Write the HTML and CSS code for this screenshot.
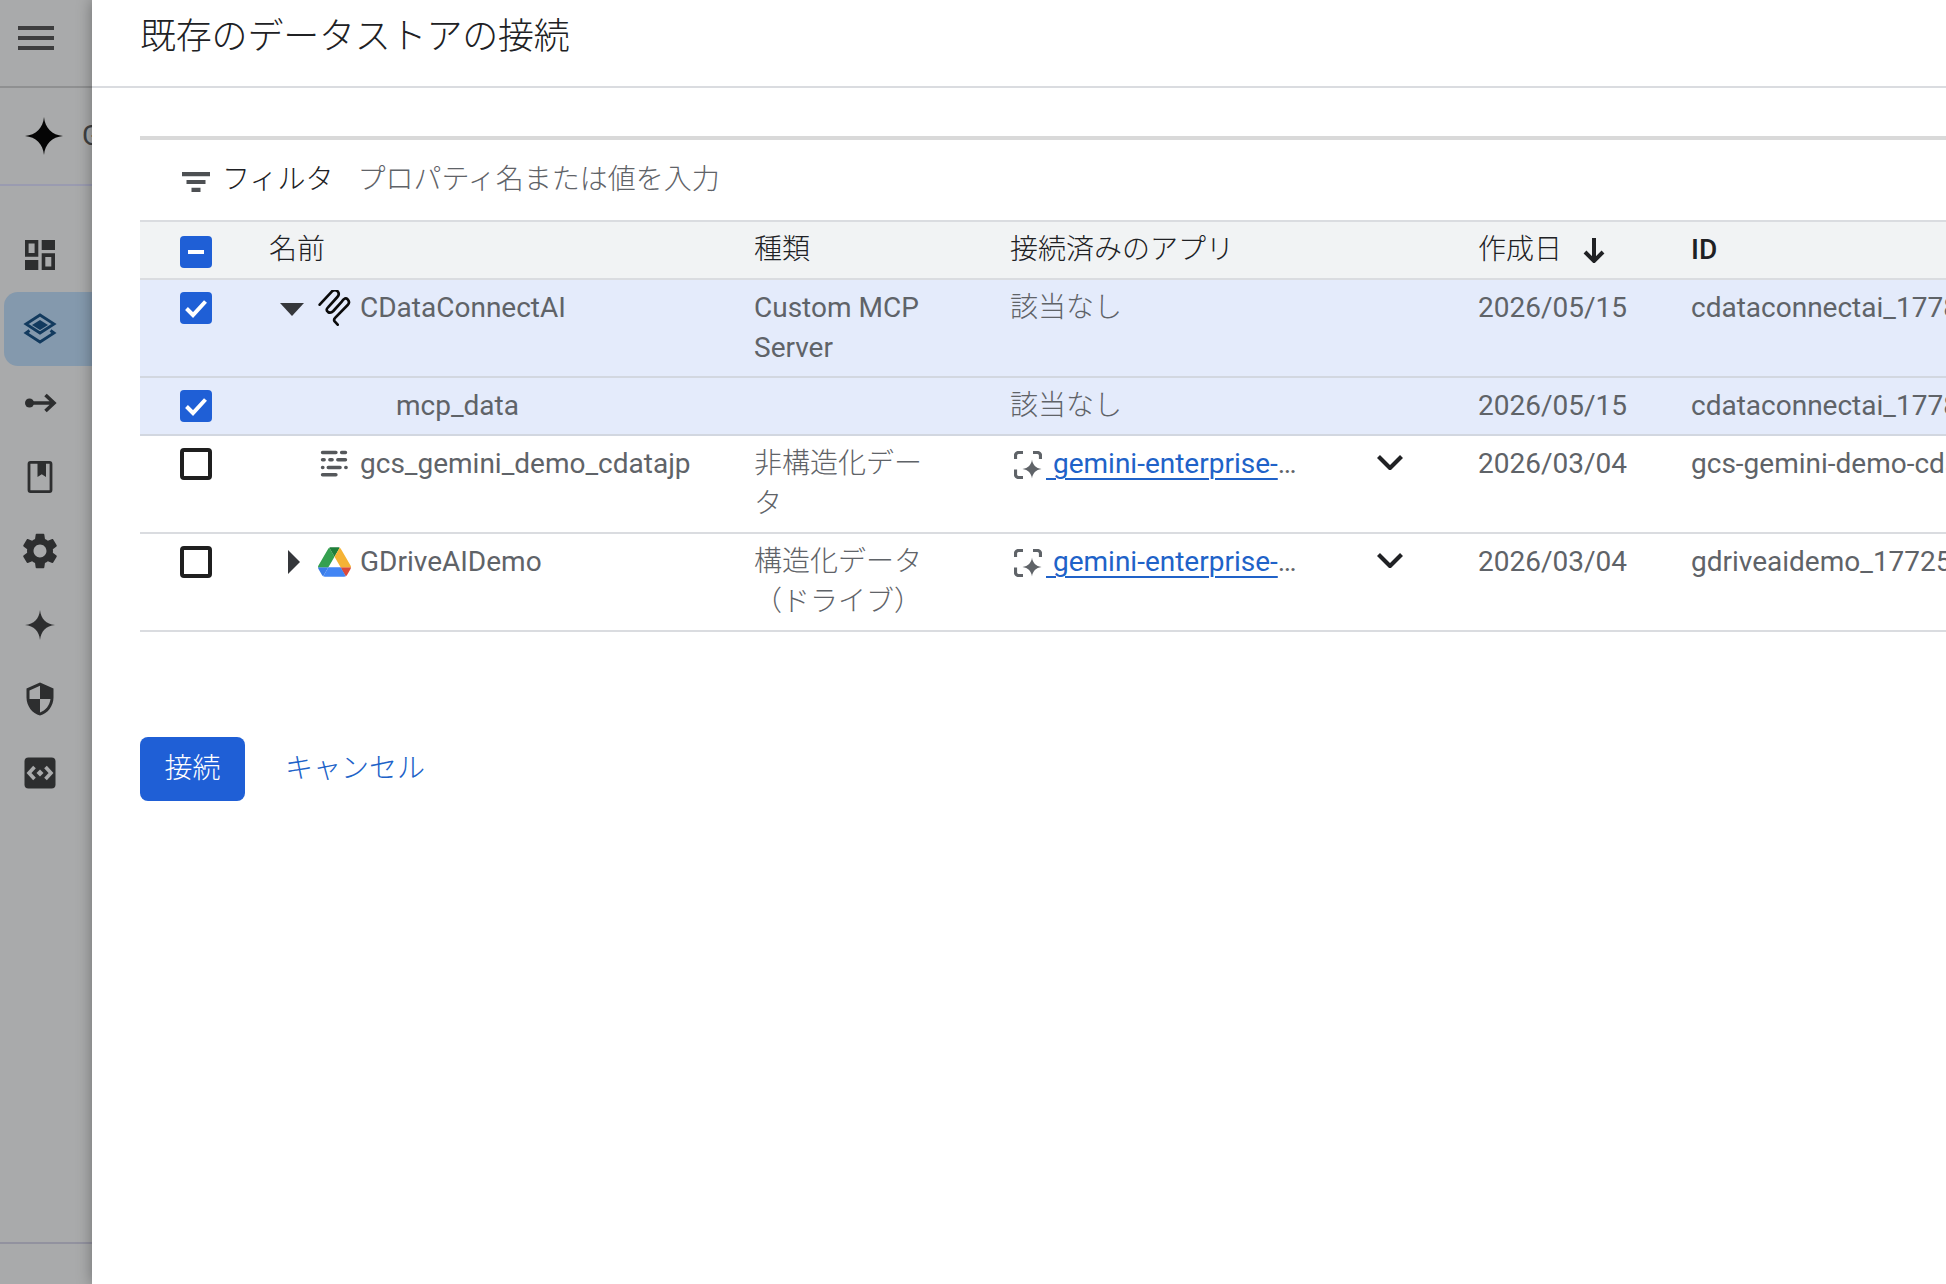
FILE: index.html
```html
<!DOCTYPE html>
<html lang="ja">
<head>
<meta charset="utf-8">
<title>既存のデータストアの接続</title>
<link rel="stylesheet" href="styles.css">
</head>
<body>
<aside class="sidebar">
  <div class="side-top">
    <svg class="burger" viewBox="0 0 36 24"><path d="M0 2h36M0 12h36M0 22h36"/></svg>
  </div>
  <div class="side-brand">
    <svg class="brand-star" viewBox="0 0 38 38"><path d="M19 0C20 11 27 18 38 19 27 20 20 27 19 38 18 27 11 20 0 19 11 18 18 11 19 0Z"/></svg>
    <span class="brand-name">Gemini Enterprise</span>
  </div>
  <nav class="side-nav">
    <a class="nav-item">
      <svg class="nav-icon" viewBox="0 0 36 36"><path fill-rule="evenodd" d="M3 3h13.3v16.7H3zM6.6 6.6v9.500h6V6.600zM19.700 3H33v10H19.700zM3 23h13.300v10H3zM19.700 16.300H33V33H19.700zM23.300 19.900v9.500h6v-9.500z"/></svg>
    </a>
    <a class="nav-item active">
      <svg class="nav-icon" viewBox="0 0 36 36"><path class="layer-line" d="M18 4 32 13 18 22 4 13Z"/><path class="layer-fill" d="M18 9 26 14 18 19 10 14Z"/><path class="layer-line" d="M7.500 19.500 4 22 18 31 32 22 28.500 19.500"/></svg>
    </a>
    <a class="nav-item">
      <svg class="nav-icon" viewBox="0 0 36 36"><circle cx="7.500" cy="18" r="4.500"/><path class="arrow-line" d="M8 18h23M23.500 10l8.500 8-8.500 8"/></svg>
    </a>
    <a class="nav-item">
      <svg class="nav-icon" viewBox="0 0 36 36"><path class="book-line" d="M8.500 3.400h19A1.500 1.500 0 0 1 29 4.900v26.200a1.500 1.500 0 0 1-1.500 1.500h-19A1.500 1.500 0 0 1 7 31.100V4.900a1.500 1.500 0 0 1 1.500-1.500z"/><path d="M15.500 4h8.500v14l-4.250-2.800-4.250 2.800z"/></svg>
    </a>
    <a class="nav-item">
      <svg class="nav-icon" viewBox="2 2 20 20"><path d="M19.140 12.940c.04-.3.06-.61.06-.94 0-.32-.02-.64-.07-.94l2.030-1.580c.18-.14.23-.41.12-.61l-1.920-3.320c-.12-.22-.37-.29-.59-.22l-2.390.96c-.5-.38-1.030-.7-1.620-.94l-.36-2.540c-.04-.24-.24-.41-.48-.41h-3.840c-.24 0-.43.17-.47.41l-.36 2.540c-.59.24-1.130.57-1.620.94l-2.390-.96c-.22-.08-.47 0-.59.22L2.740 8.870c-.12.21-.08.47.12.61l2.030 1.580c-.05.3-.09.63-.09.94s.02.64.07.94l-2.030 1.580c-.18.14-.23.41-.12.61l1.920 3.320c.12.22.37.29.59.22l2.390-.96c.5.38 1.030.7 1.620.94l.36 2.540c.05.24.24.41.48.41h3.840c.24 0 .44-.17.47-.41l.36-2.540c.59-.24 1.130-.56 1.620-.94l2.390.96c.22.08.47 0 .59-.22l1.920-3.320c.12-.22.07-.47-.12-.61l-2.010-1.580zM12 15.600c-1.980 0-3.600-1.620-3.600-3.600s1.620-3.600 3.600-3.600 3.600 1.620 3.600 3.600-1.620 3.600-3.600 3.600z"/></svg>
    </a>
    <a class="nav-item">
      <svg class="nav-icon" viewBox="0 0 36 36"><path d="M18 3C19 12 24 17 33 18 24 19 19 24 18 33 17 24 12 19 3 18 12 17 17 12 18 3Z"/></svg>
    </a>
    <a class="nav-item">
      <svg class="nav-icon" viewBox="0 0 24 24"><path d="M12 1L3 5v6c0 5.550 3.840 10.740 9 12 5.160-1.260 9-6.450 9-12V5l-9-4zm0 10.990h7c-.53 4.120-3.280 7.790-7 8.940V12H5V6.300l7-3.110v8.800z"/></svg>
    </a>
    <a class="nav-item">
      <svg class="nav-icon" viewBox="0 0 36 36"><rect x="2.500" y="2.500" width="31" height="31" rx="4"/><path class="code-mark" d="M12.500 12 7 18l5.500 6M23.500 12 29 18l-5.500 6"/><path class="code-dot" d="M14.500 18l3.500-3.500 3.500 3.500-3.500 3.500z"/></svg>
    </a>
  </nav>
  <div class="side-foot"></div>
</aside>

<main class="panel">
  <header class="panel-head">
    <h1 class="panel-title ja">既存のデータストアの接続</h1>
  </header>
  <section class="stores">
    <div class="filter-bar">
      <svg class="filter-icon" viewBox="0 0 28 20"><path d="M0 0h28v4.200H0zM4.500 7.900h19v4.200h-19zM9.500 15.800h9V20h-9z"/></svg>
      <span class="filter-label ja">フィルタ</span>
      <span class="filter-hint ja">プロパティ名または値を入力</span>
    </div>
    <table class="grid">
      <colgroup>
        <col class="c-check"><col class="c-name"><col class="c-type"><col class="c-apps"><col class="c-date"><col class="c-id">
      </colgroup>
      <thead>
        <tr>
          <th class="check-cell"><span class="check mixed"><svg viewBox="0 0 32 32"><path d="M8 16h16"/></svg></span></th>
          <th class="ja">名前</th>
          <th class="ja">種類</th>
          <th class="ja">接続済みのアプリ</th>
          <th class="ja"><span class="sort-head">作成日<svg class="sort-arrow" viewBox="0 0 22 26"><path d="M11 1v23M2 15l9 9 9-9"/></svg></span></th>
          <th class="id-head">ID</th>
        </tr>
      </thead>
      <tbody>
        <tr class="selected">
          <td class="check-cell"><span class="check on"><svg viewBox="0 0 32 32"><path d="M6.500 16.500 13 23 25.500 9.500"/></svg></span></td>
          <td>
            <div class="name">
              <span class="exp"><svg viewBox="0 0 49 40"><path d="M11 15h24L23 28z"/></svg></span>
              <span class="ds-icon"><svg class="mcp" viewBox="24 18 99 108"><path d="M29 62 66 22Q75 14 83 22 90 30 82 39L54 70Q46 78 54 84 62 89 70 81L96 52Q105 38 113 46 121 55 113 63L76 101Q70 107 74 112L83 122"/></svg></span>
              <span>CDataConnectAI</span>
            </div>
          </td>
          <td class="type">Custom MCP Server</td>
          <td class="ja">該当なし</td>
          <td>2026/05/15</td>
          <td>cdataconnectai_1778823456789</td>
        </tr>
        <tr class="selected">
          <td class="check-cell"><span class="check on"><svg viewBox="0 0 32 32"><path d="M6.500 16.500 13 23 25.500 9.500"/></svg></span></td>
          <td><div class="name child">mcp_data</div></td>
          <td class="type"></td>
          <td class="ja">該当なし</td>
          <td>2026/05/15</td>
          <td>cdataconnectai_1778823456789_mcp_data</td>
        </tr>
        <tr>
          <td class="check-cell"><span class="check"></span></td>
          <td>
            <div class="name">
              <span class="exp"></span>
              <span class="ds-icon"><svg class="gcs" viewBox="28 22 88 88"><path d="M36 30h42M96 30h12M36 53h5M59 53h7M84 53h24M36 77h1M54 77h37M109 77h1M36 100h42"/></svg></span>
              <span>gcs_gemini_demo_cdatajp</span>
            </div>
          </td>
          <td class="type ja">非構造化データ</td>
          <td>
            <div class="apps">
              <svg class="app-icon" viewBox="0 0 28 28"><path class="app-line" d="M1.500 8V4.500a3 3 0 0 1 3-3H9M19 1.500h4.500a3 3 0 0 1 3 3V8M1.500 18.500v5a3 3 0 0 0 3 3H9"/><path class="app-star" d="M18 8.500c.6 5.300 3.900 8.600 9.500 9.500-5.600.9-8.900 4.200-9.500 9.500-.6-5.300-3.900-8.600-9.500-9.500 5.600-.9 8.900-4.200 9.500-9.500z"/></svg>
              <span class="app-link"><a>&nbsp;gemini-enterprise-app_177</a></span>
              <svg class="chev" viewBox="0 0 26 15"><path d="M1.500 1.500 13 13 24.500 1.500"/></svg>
            </div>
          </td>
          <td>2026/03/04</td>
          <td>gcs-gemini-demo-cdatajp_1772512345678</td>
        </tr>
        <tr>
          <td class="check-cell"><span class="check"></span></td>
          <td>
            <div class="name">
              <span class="exp"><svg viewBox="0 0 49 40"><path d="M19 8 31 20 19 32z"/></svg></span>
              <span class="ds-icon"><svg class="drive" viewBox="0 0 87.300 78"><path d="m6.600 66.850 3.850 6.650c.8 1.400 1.950 2.500 3.300 3.300l13.750-23.800h-27.500c0 1.550.4 3.100 1.200 4.500z" fill="#3b7de8"/><path d="m43.650 25-13.750-23.800c-1.350.8-2.500 1.900-3.300 3.300l-25.400 44a9.060 9.060 0 0 0 -1.200 4.500h27.500z" fill="#34a04f"/><path d="m73.550 76.800c1.350-.8 2.500-1.900 3.300-3.300l1.600-2.750 7.650-13.250c.8-1.400 1.200-2.950 1.200-4.500h-27.502l5.852 11.500z" fill="#dc4a3a"/><path d="m43.650 25 13.750-23.800c-1.350-.8-2.900-1.200-4.500-1.200h-18.500c-1.600 0-3.150.45-4.500 1.200z" fill="#1e7e3a"/><path d="m59.800 53h-32.300l-13.750 23.800c1.350.8 2.900 1.200 4.500 1.200h50.800c1.600 0 3.150-.45 4.500-1.200z" fill="#4285f4"/><path d="m73.400 26.500-12.700-22c-.8-1.400-1.950-2.500-3.300-3.300l-13.750 23.800 16.150 28h27.450c0-1.550-.4-3.100-1.200-4.500z" fill="#f5b335"/></svg></span>
              <span>GDriveAIDemo</span>
            </div>
          </td>
          <td class="type ja">構造化データ（ドライブ）</td>
          <td>
            <div class="apps">
              <svg class="app-icon" viewBox="0 0 28 28"><path class="app-line" d="M1.500 8V4.500a3 3 0 0 1 3-3H9M19 1.500h4.500a3 3 0 0 1 3 3V8M1.500 18.500v5a3 3 0 0 0 3 3H9"/><path class="app-star" d="M18 8.500c.6 5.300 3.900 8.600 9.500 9.500-5.600.9-8.900 4.200-9.500 9.500-.6-5.300-3.900-8.600-9.500-9.500 5.600-.9 8.900-4.200 9.500-9.500z"/></svg>
              <span class="app-link"><a>&nbsp;gemini-enterprise-app_177</a></span>
              <svg class="chev" viewBox="0 0 26 15"><path d="M1.500 1.500 13 13 24.500 1.500"/></svg>
            </div>
          </td>
          <td>2026/03/04</td>
          <td>gdriveaidemo_1772598765432</td>
        </tr>
      </tbody>
    </table>
    <div class="actions">
      <button class="btn-primary ja" type="button">接続</button>
      <a class="btn-text ja">キャンセル</a>
    </div>
  </section>
</main>
</body>
</html>
```
FILE: styles.css
```css
* { box-sizing: border-box; }
html, body { margin: 0; height: 100%; overflow: hidden; }
body {
  display: flex;
  background: #fff;
  font-family: Roboto, "Noto Sans CJK JP", sans-serif;
  font-size: 28px;
  line-height: 40px;
  color: #5f6368;
}

/* sidebar under scrim */
.sidebar {
  flex: 0 0 92px;
  width: 92px;
  height: 1284px;
  display: flex;
  flex-direction: column;
  background: #a9aaab;
  overflow: hidden;
}
.side-top {
  flex: 0 0 88px;
  padding: 26px 0 0 18px;
  border-bottom: 2px solid #8f9091;
}
.burger { display: block; width: 36px; height: 24px; }
.burger path { stroke: #3d3d3e; stroke-width: 4; fill: none; }
.side-brand {
  flex: 0 0 98px;
  display: flex;
  align-items: center;
  padding-left: 25px;
  border-bottom: 2px solid #9a9bb0;
  white-space: nowrap;
}
.brand-star { flex: none; width: 38px; height: 38px; fill: #050505; }
.brand-name { margin-left: 19px; color: #3f4041; }
.side-nav {
  flex: 1;
  padding: 32px 0 0 4px;
  display: flex;
  flex-direction: column;
}
.nav-item {
  flex: 0 0 74px;
  display: flex;
  align-items: center;
  padding-left: 18px;
  border-radius: 14px 0 0 14px;
}
.nav-item.active { background: #8499ad; }
.nav-icon { width: 36px; height: 36px; fill: #2d2e2f; }
.layer-line { fill: none; stroke: #123a5e; stroke-width: 2.800; }
.layer-fill { fill: #123a5e; }
.arrow-line { fill: none; stroke: #2d2e2f; stroke-width: 3.600; }
.book-line { fill: none; stroke: #2d2e2f; stroke-width: 2.800; }
.code-mark { fill: none; stroke: #a9aaab; stroke-width: 3.600; }
.code-dot { fill: #a9aaab; }
.side-foot {
  flex: 0 0 42px;
  border-top: 2px solid #92929f;
}

/* panel */
.panel {
  flex: 1;
  min-width: 0;
  height: 1284px;
  overflow: hidden;
  background: #fff;
  box-shadow: 0 0 14px rgba(0, 0, 0, .35);
  position: relative;
}
.ja { font-weight: 300; }
.panel-head {
  height: 88px;
  padding-left: 48px;
  border-bottom: 2px solid #dadce0;
}
.panel-title {
  margin: 0;
  font-size: 36px;
  letter-spacing: -.2px;
  line-height: 74px;
  color: #202124;
}
.panel-title.ja { font-weight: 300; }
.stores { margin: 48px 0 0 48px; width: 2400px; }
.filter-bar {
  height: 84px;
  display: flex;
  align-items: center;
  padding-left: 42px;
  border-top: 4px solid #d9d9d9;
}
.filter-icon { width: 28px; height: 20px; fill: #4d5053; margin: 4px 12px 0 0; }
.filter-label { color: #202124; margin-right: 24px; }
.filter-hint { color: #5f6368; }

.grid {
  width: 2400px;
  table-layout: fixed;
  border-collapse: separate;
  border-spacing: 0;
}
.c-check { width: 113px; }
.c-name { width: 485px; }
.c-type { width: 256px; }
.c-apps { width: 468px; }
.c-date { width: 213px; }
.c-id { width: 865px; }
.grid th, .grid td {
  padding: 8px 0 8px 16px;
  border-bottom: 2px solid #dadce0;
  text-align: left;
  vertical-align: top;
}
.grid th, .grid td { font-weight: 400; }
.grid th.ja, .grid td.ja { font-weight: 300; }
.grid th {
  background: #f1f3f4;
  border-top: 2px solid #dadce0;
  color: #202124;
}
.grid .id-head { font-weight: 500; }
.grid td.type { padding-right: 64px; }
.grid tr.selected td { background: #e4ebfb; border-bottom-color: #d2d7e0; }
.grid .check-cell { padding: 4px 0 4px 40px; }
.grid th.check-cell { padding-top: 6px; padding-bottom: 6px; }

.check {
  display: block;
  width: 32px;
  height: 32px;
  margin-top: 8px;
  border: 4px solid #1f1f1f;
  border-radius: 4px;
  background: #fff;
}
.check svg { display: block; width: 32px; height: 32px; }
.check.on, .check.mixed { border: 0; background: #1f5fd6; }
.check svg path { fill: none; stroke: #fff; stroke-width: 4; }

.sort-head { display: flex; align-items: center; }
.sort-arrow { width: 22px; height: 26px; margin-left: 21px; }
.sort-arrow path { fill: none; stroke: #202124; stroke-width: 4; }

.name { display: flex; align-items: center; height: 40px; white-space: nowrap; }
.name.child { padding-left: 127px; }
.exp { flex: 0 0 49px; height: 40px; }
.exp svg { display: block; width: 49px; height: 40px; fill: #35373b; }
.ds-icon { flex: 0 0 42px; height: 40px; display: flex; align-items: center; }
.mcp { width: 33px; height: 36px; }
.mcp path { fill: none; stroke: #0b0b0b; stroke-width: 8; stroke-linecap: round; stroke-linejoin: round; }
.gcs { width: 28px; height: 28px; margin-left: 2px; }
.gcs path { fill: none; stroke: #55585b; stroke-width: 11; stroke-linecap: round; }
.drive { width: 33px; height: 30px; }

.apps { display: flex; align-items: center; height: 40px; white-space: nowrap; }
.app-icon { flex: none; width: 28px; height: 28px; margin: 2px 4px 0 4px; }
.app-line { fill: none; stroke: #5f6368; stroke-width: 3.200; }
.app-star { fill: #5f6368; }
.app-link { width: 252px; overflow: hidden; text-overflow: ellipsis; }
.app-link a { color: #2062c8; text-decoration: underline; text-underline-offset: 5px; text-decoration-thickness: 2px; }
.chev { flex: none; width: 26px; height: 15px; margin: -3px 0 0 79px; }
.chev path { fill: none; stroke: #202124; stroke-width: 4.200; }

.actions { display: flex; align-items: center; margin-top: 105px; }
.btn-primary {
  width: 105px;
  height: 64px;
  padding: 0;
  border: 0;
  border-radius: 8px;
  background: #1f5fd6;
  color: #fff;
  font: inherit;
  font-weight: 300;
}
.btn-text { margin-left: 40px; color: #2062c8; }
```
